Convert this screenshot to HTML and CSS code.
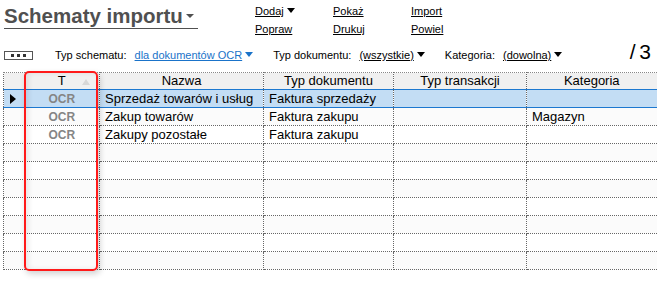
FILE: index.html
```html
<!DOCTYPE html>
<html lang="pl">

<head>
    <meta charset="UTF-8">
    <title>Schematy importu</title>
    <link rel="stylesheet" href="styles.css">
</head>

<body>
    <!-- Pasek tytułu i akcji -->
    <div class="toolbar">
        <div class="title">Schematy importu<span class="title-arrow"></span></div>
        <div class="actions">
            <div class="action-col">
                <a href="#">Dodaj</a><span class="tri"></span>
                <a href="#">Popraw</a>
            </div>
            <div class="action-col">
                <a href="#">Pokaż</a>
                <a href="#">Drukuj</a>
            </div>
            <div class="action-col">
                <a href="#">Import</a>
                <a href="#">Powiel</a>
            </div>
        </div>
    </div>

    <!-- Filtry -->
    <div class="filters">
        <button class="more"><span class="dot"></span><span class="dot"></span><span class="dot"></span></button>
        <span class="label">Typ schematu:</span>
        <a href="#" class="val blue">dla dokumentów OCR<span class="tri tri-blue"></span></a>
        <span class="label">Typ dokumentu:</span>
        <a href="#" class="val">(wszystkie)<span class="tri"></span></a>
        <span class="label">Kategoria:</span>
        <a href="#" class="val">(dowolna)<span class="tri"></span></a>
        <span class="count">/ 3</span>
    </div>

    <!-- Lista schematów -->
    <div class="grid-wrap">
        <table class="grid">
            <colgroup>
                <col class="c-ind">
                <col class="c-t">
                <col class="c-nazwa">
                <col class="c-typ">
                <col class="c-trans">
                <col class="c-kat">
            </colgroup>
            <thead>
                <tr>
                    <th class="ind"></th>
                    <th class="sort">T<span class="sort-tri"></span></th>
                    <th>Nazwa</th>
                    <th>Typ dokumentu</th>
                    <th>Typ transakcji</th>
                    <th>Kategoria</th>
                </tr>
            </thead>
            <tbody>
                <tr class="selected">
                    <td class="ind"><span class="pointer"></span></td>
                    <td class="ocr">OCR</td>
                    <td>Sprzedaż towarów i usług</td>
                    <td>Faktura sprzedaży</td>
                    <td></td>
                    <td></td>
                </tr>
                <tr>
                    <td class="ind"></td>
                    <td class="ocr">OCR</td>
                    <td>Zakup towarów</td>
                    <td>Faktura zakupu</td>
                    <td></td>
                    <td>Magazyn</td>
                </tr>
                <tr>
                    <td class="ind"></td>
                    <td class="ocr">OCR</td>
                    <td>Zakupy pozostałe</td>
                    <td>Faktura zakupu</td>
                    <td></td>
                    <td></td>
                </tr>
                <tr><td class="ind"></td><td></td><td></td><td></td><td></td><td></td></tr>
                <tr><td class="ind"></td><td></td><td></td><td></td><td></td><td></td></tr>
                <tr><td class="ind"></td><td></td><td></td><td></td><td></td><td></td></tr>
                <tr><td class="ind"></td><td></td><td></td><td></td><td></td><td></td></tr>
                <tr><td class="ind"></td><td></td><td></td><td></td><td></td><td></td></tr>
                <tr><td class="ind"></td><td></td><td></td><td></td><td></td><td></td></tr>
                <tr><td class="ind"></td><td></td><td></td><td></td><td></td><td></td></tr>
            </tbody>
        </table>
        <!-- Zaznaczenie kolumny T -->
        <div class="highlight"></div>
    </div>
</body>

</html>
```

FILE: styles.css
```css
* {
    margin: 0;
    padding: 0;
    box-sizing: border-box;
}

body {
    background-color: #fff;
    font-family: "Liberation Sans", Arial, sans-serif;
    color: #000;
    width: 658px;
    height: 290px;
    overflow: hidden;
}

a {
    color: #000;
}

/* Pasek tytułu */
.toolbar {
    display: flex;
    height: 42px;
}

.title {
    margin: 3px 0 0 4px;
    width: 194px;
    height: 26px;
    font-size: 20.5px;
    font-weight: bold;
    color: #505050;
    line-height: 25px;
    border-bottom: 1px solid #505050;
    white-space: nowrap;
}

.title-arrow {
    display: inline-block;
    margin-left: 3px;
    vertical-align: 5px;
    border-left: 4px solid transparent;
    border-right: 4px solid transparent;
    border-top: 4px solid #505050;
}

.actions {
    display: flex;
    margin-left: 57px;
    padding-top: 2px;
}

.action-col {
    width: 78px;
    font-size: 11px;
    line-height: 18px;
}

.action-col a {
    display: inline-block;
}

.action-col a + a {
    display: block;
}

.tri {
    display: inline-block;
    margin-left: 3px;
    vertical-align: 2px;
    border-left: 4px solid transparent;
    border-right: 4px solid transparent;
    border-top: 5px solid #000;
}

/* Filtry */
.filters {
    display: flex;
    align-items: center;
    height: 26px;
    font-size: 11px;
    padding-left: 4px;
}

.more {
    display: flex;
    justify-content: center;
    align-items: center;
    gap: 3px;
    width: 29px;
    height: 9px;
    border: 1px solid #555;
    background: #fff;
    margin-right: 22px;
}

.dot {
    width: 3px;
    height: 3px;
    background-color: #333;
}

.label {
    margin-right: 8px;
}

.val {
    margin-right: 20px;
}

.blue {
    color: #1a73c9;
}

.tri-blue {
    border-top-color: #1a73c9;
}

.count {
    margin-left: auto;
    margin-right: 8px;
    font-size: 21px;
    margin-top: -6px;
    letter-spacing: -1px;
}

/* Tabela */
.grid-wrap {
    position: relative;
    margin: 4px 0 0 3px;
    width: 653px;
}

.grid {
    width: 653px;
    border-collapse: collapse;
    table-layout: fixed;
    font-size: 13px;
}

.c-ind { width: 21px; }
.c-t { width: 75px; }
.c-nazwa { width: 164px; }
.c-typ { width: 130px; }
.c-trans { width: 133px; }
.c-kat { width: 130px; }

.grid th,
.grid td {
    height: 18px;
    border-bottom: 1px dotted #666;
    border-right: 1px dotted #666;
    padding: 0 5px;
    white-space: nowrap;
    overflow: hidden;
    line-height: 16px;
}

.grid th {
    height: 17px;
    background-color: #f0f0f0;
    font-weight: normal;
    border-top: 1px dotted #888;
    border-bottom: none;
    text-align: center;
}

.grid th:first-child,
.grid td:first-child {
    border-left: 1px dotted #666;
}

.grid .ind {
    border-right: none;
    padding: 0;
}

.grid th:last-child,
.grid td:last-child {
    border-right: none;
}

.grid tbody tr:nth-child(even) td {
    background-color: #fbfbfb;
}

.sort {
    position: relative;
}

.sort-tri {
    position: absolute;
    right: 9px;
    top: 6px;
    border-left: 4px solid transparent;
    border-right: 4px solid transparent;
    border-bottom: 6px solid #d8d8d8;
}

.ocr {
    text-align: center;
    font-size: 12px;
    font-weight: bold;
    color: #858585;
}

/* Wiersz zaznaczony */
.grid tr.selected td {
    background-color: #c3ddf4;
    border-top: 1px solid #1c78d0;
    border-bottom: 1px solid #1c78d0;
}

.pointer {
    display: inline-block;
    margin-left: 6px;
    vertical-align: -1px;
    border-top: 5px solid transparent;
    border-bottom: 5px solid transparent;
    border-left: 6px solid #000;
}

/* Ramka wokół kolumny T */
.highlight {
    position: absolute;
    left: 21px;
    top: -1px;
    width: 74px;
    height: 200px;
    border: 2px solid #ff1a1a;
    border-radius: 5px;
    box-shadow: 2px 3px 6px rgba(0, 0, 0, 0.18), inset 3px 0 5px rgba(0, 0, 0, 0.08);
    pointer-events: none;
}
```
